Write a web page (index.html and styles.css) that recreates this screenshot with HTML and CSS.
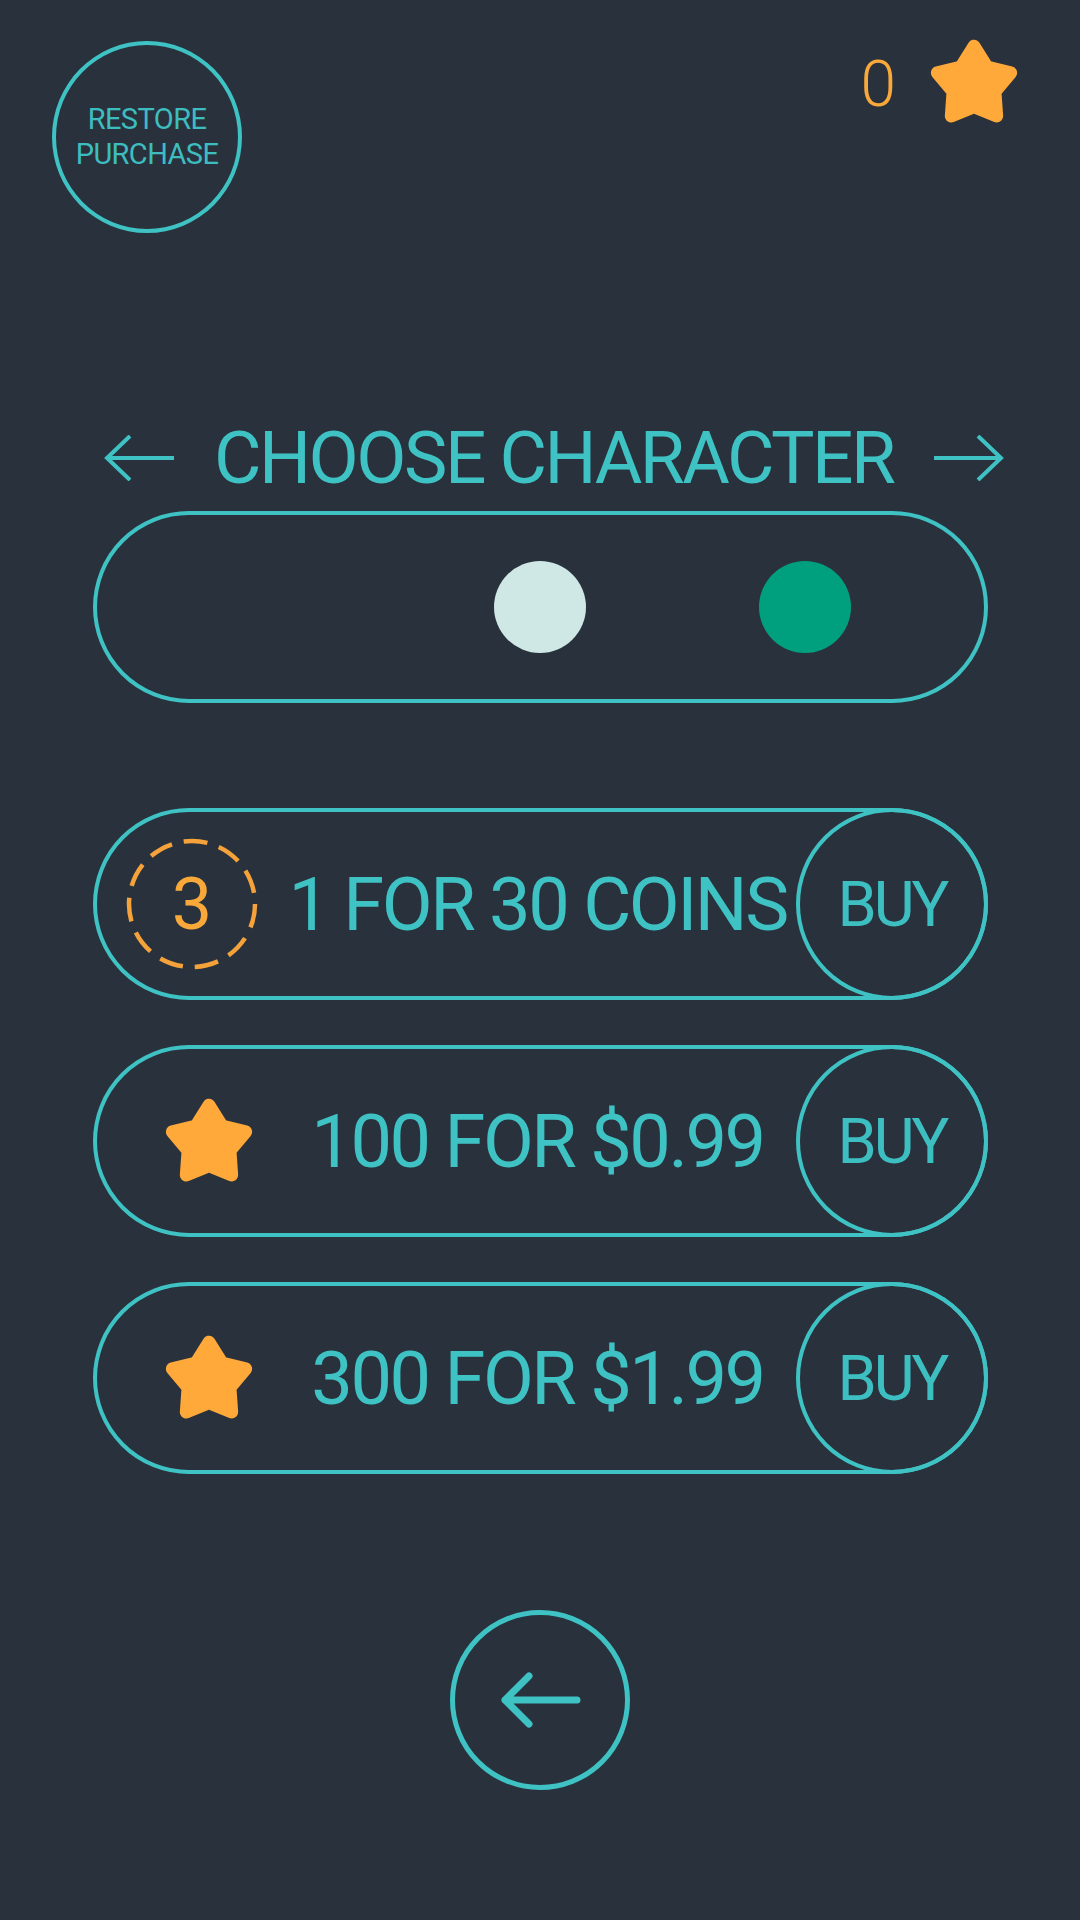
FILE: index.html
```html
<!DOCTYPE html>
<html>
<head>
  <title>Shop</title>
  <link rel="stylesheet" href="styles.css">
</head>
<body>
  <div class="screen">
    <div class="header">
      <button class="restore-btn">
        <span class="restore-line">RESTORE</span>
        <span class="restore-line">PURCHASE</span>
      </button>
      <div class="score">
        <span class="score-value">0</span>
        <svg class="star star-top" viewBox="0 0 100 100">
          <polygon points="50,11 64.1,33.6 89.9,40 72.8,60.4 74.7,87 50,77 25.3,87 27.2,60.4 10.1,40 35.9,33.6"/>
        </svg>
      </div>
    </div>

    <div class="title-row">
      <!-- previous character -->
      <svg class="title-arrow" viewBox="0 0 70 46">
        <path d="M70 23H3M26 1L3 23L26 45"/>
      </svg>
      <h2 class="title">CHOOSE CHARACTER</h2>
      <!-- next character -->
      <svg class="title-arrow" viewBox="0 0 70 46">
        <path d="M0 23H67M44 1L67 23L44 45"/>
      </svg>
    </div>

    <div class="character-pill">
      <div class="dot dot-light"></div>
      <div class="dot dot-green"></div>
    </div>

    <div class="offers">
      <div class="offer">
        <div class="offer-icon">
          <div class="coin">
            <svg viewBox="0 0 134 134">
              <circle cx="67" cy="67" r="63"/>
            </svg>
            <span class="coin-count">3</span>
          </div>
        </div>
        <div class="offer-text">1 FOR 30 COINS</div>
        <button class="buy-btn">BUY</button>
      </div>

      <div class="offer">
        <div class="offer-icon">
          <svg class="star star-offer" viewBox="0 0 100 100">
            <polygon points="50,11 64.1,33.6 89.9,40 72.8,60.4 74.7,87 50,77 25.3,87 27.2,60.4 10.1,40 35.9,33.6"/>
          </svg>
        </div>
        <div class="offer-text">100 FOR $0.99</div>
        <button class="buy-btn">BUY</button>
      </div>

      <div class="offer">
        <div class="offer-icon">
          <svg class="star star-offer" viewBox="0 0 100 100">
            <polygon points="50,11 64.1,33.6 89.9,40 72.8,60.4 74.7,87 50,77 25.3,87 27.2,60.4 10.1,40 35.9,33.6"/>
          </svg>
        </div>
        <div class="offer-text">300 FOR $1.99</div>
        <button class="buy-btn">BUY</button>
      </div>
    </div>

    <div class="footer">
      <button class="back-btn">
        <svg viewBox="0 0 81 56">
          <path d="M77 28H5M29 4L5 28L29 52"/>
        </svg>
      </button>
    </div>
  </div>
</body>
</html>
```

FILE: styles.css
```css
body {
  margin: 0;
  background: #29323c;
  font-family: Roboto, 'Liberation Sans', sans-serif;
  color: #3fc2c4;
}

.screen {
  width: 1080px;
  height: 1920px;
  box-sizing: border-box;
}

button {
  font-family: inherit;
  background: transparent;
  color: #3fc2c4;
  padding: 0;
  cursor: pointer;
}

.header {
  display: flex;
  justify-content: space-between;
  align-items: flex-start;
  padding: 36px 60px 0 52px;
}

.restore-btn {
  width: 190px;
  height: 192px;
  margin-top: 5px;
  border: 4px solid #3fc2c4;
  border-radius: 50%;
  display: flex;
  flex-direction: column;
  align-items: center;
  justify-content: center;
  color: #3dbdbf;
}

.restore-line {
  display: block;
  font-size: 29px;
  line-height: 35px;
  letter-spacing: -0.6px;
}

.score {
  display: flex;
  align-items: center;
  gap: 32px;
}

.score-value {
  font-size: 64px;
  font-weight: 300;
  color: #f9a83a;
  margin-top: 4px;
}

.star polygon {
  fill: #ffa93a;
  stroke: #ffa93a;
  stroke-width: 14;
  stroke-linejoin: round;
}

.star-top {
  width: 92px;
  height: 92px;
  display: block;
}

.title-row {
  display: flex;
  align-items: center;
  gap: 40px;
  margin: 185px 0 0 104px;
  height: 80px;
}

.title-arrow {
  width: 70px;
  height: 46px;
  fill: none;
  stroke: #3fc2c4;
  stroke-width: 4;
}

.title {
  margin: 0;
  font-size: 73px;
  font-weight: 400;
  letter-spacing: -2.5px;
  line-height: 80px;
}

.character-pill {
  margin: 13px 0 0 93px;
  width: 895px;
  height: 192px;
  box-sizing: border-box;
  border: 4px solid #3fc2c4;
  border-radius: 96px;
  display: flex;
  align-items: center;
  padding-left: 397px;
  gap: 173px;
}

.dot {
  width: 92px;
  height: 92px;
  border-radius: 50%;
}

.dot-light {
  background: #cfe7e5;
}

.dot-green {
  background: #00a07e;
}

.offers {
  display: flex;
  flex-direction: column;
  gap: 45px;
  margin: 105px 0 0 93px;
  width: 895px;
}

.offer {
  height: 192px;
  box-sizing: border-box;
  border: 4px solid #3fc2c4;
  border-radius: 96px;
  display: flex;
  align-items: center;
}

.offer-icon {
  width: 160px;
  display: flex;
  align-items: center;
}

.coin {
  position: relative;
  width: 134px;
  height: 134px;
  margin-left: 28px;
}

.coin svg {
  width: 134px;
  height: 134px;
  fill: none;
  stroke: #f5a23a;
  stroke-width: 4.5;
  stroke-dasharray: 24 12;
}

.coin-count {
  position: absolute;
  inset: 0;
  display: flex;
  align-items: center;
  justify-content: center;
  font-size: 72px;
  font-weight: 400;
  color: #f9a83a;
}

.star-offer {
  width: 92px;
  height: 92px;
  margin-left: 66px;
}

.offer-text {
  flex: 1;
  text-align: center;
  padding-left: 22px;
  font-size: 74px;
  letter-spacing: -2.5px;
  white-space: nowrap;
}

.buy-btn {
  width: 192px;
  height: 192px;
  margin: -4px -4px -4px 0;
  box-sizing: border-box;
  border: 4px solid #3fc2c4;
  border-radius: 50%;
  font-size: 63px;
  letter-spacing: -3px;
  color: #3dbfc1;
}

.footer {
  display: flex;
  justify-content: center;
  margin-top: 136px;
}

.back-btn {
  width: 180px;
  height: 180px;
  border: 5px solid #3fc2c4;
  border-radius: 50%;
  display: flex;
  align-items: center;
  justify-content: center;
}

.back-btn svg {
  width: 81px;
  height: 56px;
  fill: none;
  stroke: #3fc2c4;
  stroke-width: 7;
  stroke-linecap: round;
  stroke-linejoin: round;
}
```
